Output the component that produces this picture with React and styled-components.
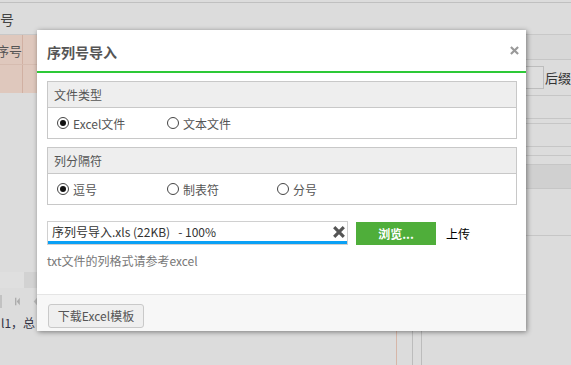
import React from 'react';
import styled, { createGlobalStyle } from 'styled-components';

const Global = createGlobalStyle`
  html, body { margin: 0; padding: 0; }
  body {
    width: 571px; height: 365px; overflow: hidden;
    background: #dcdcdc;
    font-family: "Noto Sans CJK SC", "Noto Sans", sans-serif;
  }
  * { box-sizing: border-box; }
`;

const Page = styled.div`
  position: relative;
  width: 571px;
  height: 365px;
  overflow: hidden;
  padding-top: 2px;
  display: flex;
  flex-direction: column;
`;

const TopBar = styled.div`
  height: 33px;
  border-top: 1px solid #c0c0c0;
  border-bottom: 1px solid #c8c8c8;
  display: flex;
  align-items: center;
  font-size: 14px;
  color: #444;
`;

const BgBody = styled.div`
  flex: 1;
  display: flex;
`;

const Col = styled.div`
  width: ${p => p.$w ? p.$w + 'px' : 'auto'};
  flex: ${p => p.$w ? 'none' : '1'};
  display: flex;
  flex-direction: column;
  overflow: hidden;
`;

const PinkRow = styled.div`
  height: ${p => p.$h}px;
  flex: none;
  background: #dfc8bd;
  display: flex;
  border-bottom: ${p => p.$line ? '1px solid #d6bcb0' : 'none'};
`;

const PinkCell = styled.div`
  width: 23px;
  border-right: 1px solid #d1b0a2;
  overflow: hidden;
  display: flex;
  align-items: center;
  justify-content: flex-end;
  font-size: 13px;
  color: #555;
  white-space: nowrap;
  padding-top: 2px;
`;

const Spacer = styled.div`
  height: ${p => p.$h}px;
  flex: ${p => p.$h ? 'none' : '1'};
`;

const Band = styled.div`
  height: 16px;
  flex: none;
  display: flex;
`;

const BandCell = styled.div`
  width: ${p => p.$w}px;
  background: ${p => p.$bg};
`;

const Pager = styled.div`
  height: 26px;
  flex: none;
  display: flex;
  align-items: center;
`;

const PagerBar = styled.div`
  width: 3px;
  height: 13px;
  background: #c2c2c2;
  margin-right: 13px;
`;

const FooterText = styled.div`
  font-size: 12px;
  color: #334;
  white-space: nowrap;
  padding-left: 1px;
  width: 37px;
  overflow: hidden;
`;

const RRow = styled.div`
  height: ${p => p.$h}px;
  flex: none;
  background: ${p => p.$bg || 'transparent'};
  border-bottom: 1px solid #c6c6c6;
  display: flex;
  align-items: center;
`;

const RInput = styled.div`
  width: 20px;
  height: 23px;
  border: 1px solid #bdbdbd;
  border-left: none;
  background: #dedede;
`;

const RLabel = styled.span`
  font-size: 13px;
  color: #333;
  margin-left: 1px;
  white-space: nowrap;
`;

const MidBottom = styled.div`
  height: 34px;
  flex: none;
  display: flex;
`;

const VCell = styled.div`
  width: ${p => p.$w}px;
  border-right: 1px solid ${p => p.$c};
`;

const Modal = styled.div`
  position: absolute;
  left: 37px;
  top: 30px;
  width: 489px;
  height: 301px;
  background: #fff;
  box-shadow: 1px 1px 5px rgba(0, 0, 0, 0.45);
  display: flex;
  flex-direction: column;
`;

const Header = styled.div`
  height: 43px;
  flex: none;
  border-bottom: 2px solid #2dc937;
  display: flex;
  align-items: center;
  justify-content: space-between;
  padding: 0 7px 0 10px;
`;

const Title = styled.div`
  font-size: 14px;
  font-weight: 700;
  color: #555;
  padding-top: 3px;
`;

const Content = styled.div`
  flex: 1;
  padding: 8px 9px 0 10px;
`;

const Group = styled.div`
  border: 1px solid #c8c8c8;
  & + & { margin-top: 8px; }
`;

const GroupHead = styled.div`
  height: 26px;
  background: #eeeeee;
  border-bottom: 1px solid #c8c8c8;
  padding-left: 6px;
  font-size: 12px;
  line-height: 25px;
  color: #555;
`;

const GroupBody = styled.div`
  height: 30px;
  display: flex;
  align-items: center;
  padding-left: 9px;
`;

const Option = styled.label`
  width: 110px;
  display: flex;
  align-items: center;
  gap: 4px;
  font-size: 12px;
  color: #555;
`;

const Radio = styled.span`
  width: 12px;
  height: 12px;
  border-radius: 50%;
  border: 1px solid #444;
  background: #fff;
  display: flex;
  align-items: center;
  justify-content: center;
  &::after {
    content: '';
    width: 6px;
    height: 6px;
    border-radius: 50%;
    background: ${p => p.$on ? '#111' : 'transparent'};
  }
`;

const FileRow = styled.div`
  margin-top: 16px;
  display: flex;
  align-items: center;
`;

const FileBox = styled.div`
  width: 301px;
  height: 24px;
  border: 1px solid #d0d0d0;
  display: flex;
  flex-direction: column;
`;

const FileTop = styled.div`
  flex: 1;
  display: flex;
  align-items: center;
  justify-content: space-between;
  padding: 0 2px 0 4px;
  font-size: 12px;
  color: #333;
  white-space: pre;
`;

const Progress = styled.div`
  height: 3px;
  background: #0aa0f5;
`;

const Browse = styled.button`
  margin-left: 8px;
  width: 80px;
  height: 23px;
  border: none;
  background: #4fae3a;
  color: #fff;
  font-family: inherit;
  font-size: 12px;
  font-weight: 700;
  padding: 0;
`;

const Upload = styled.span`
  margin-left: 10px;
  font-size: 12px;
  color: #000;
`;

const Hint = styled.div`
  margin-top: 8px;
  font-size: 12px;
  line-height: 16px;
  color: #777;
`;

const Footer = styled.div`
  height: 37px;
  flex: none;
  border-top: 1px solid #e5e5e5;
  background: #f7f7f7;
  padding: 7px 0 0 11px;
`;

const GrayButton = styled.button`
  width: 96px;
  height: 24px;
  border: 1px solid #c9c9c9;
  border-radius: 3px;
  background: #efefef;
  color: #555;
  font-family: inherit;
  font-size: 12px;
  padding: 0;
`;

const XIcon = ({ size, color, w }) => (
  <svg width={size} height={size} viewBox="0 0 10 10" style={{ display: 'block' }}>
    <path d="M1 1 L9 9 M9 1 L1 9" stroke={color} strokeWidth={w} strokeLinecap="butt" fill="none" />
  </svg>
);

const FirstIcon = () => (
  <svg width="7" height="13" viewBox="0 0 7 13" style={{ display: 'block' }}>
    <rect x="0" y="1" width="2" height="11" fill="#acacac" />
    <path d="M7 1 L2.5 6.5 L7 12 Z" fill="#acacac" />
  </svg>
);

const PrevIcon = () => (
  <svg width="6" height="13" viewBox="0 0 6 13" style={{ display: 'block', marginLeft: 13 }}>
    <path d="M6 1 L1 6.5 L6 12 Z" fill="#b8b8b8" />
  </svg>
);

const groups = [
  { title: '文件类型', options: ['Excel文件', '文本文件'], sel: 0 },
  { title: '列分隔符', options: ['逗号', '制表符', '分号'], sel: 0 },
];

export default function App() {
  const progress = 100;
  return (
    <>
      <Global />
      <Page>
        <TopBar>号</TopBar>
        <BgBody>
          <Col $w={37}>
            <PinkRow $h={30} $line><PinkCell>序号</PinkCell></PinkRow>
            <PinkRow $h={28}><PinkCell /></PinkRow>
            <Spacer $h={179} />
            <Band>
              <BandCell $w={24} $bg="#dfdfdf" />
              <BandCell $w={13} $bg="#d2d2d2" />
            </Band>
            <Pager>
              <PagerBar />
              <FirstIcon />
              <PrevIcon />
            </Pager>
            <FooterText>l1，总</FooterText>
          </Col>
          <Col>
            <Spacer />
            <MidBottom>
              <VCell $w={360} $c="#d6b6a8" />
              <VCell $w={16} $c="#bcbcbc" />
              <VCell $w={9} $c="#bcbcbc" />
            </MidBottom>
          </Col>
          <Col $w={45}>
            <RRow $h={25} $bg="#d8d8d8" />
            <RRow $h={36}>
              <RInput />
              <RLabel>后缀</RLabel>
            </RRow>
            <RRow $h={23} />
            <RRow $h={5} />
            <RRow $h={23} />
            <RRow $h={9} />
            <RRow $h={9} />
            <RRow $h={24} $bg="#d0d0d0" />
            <RRow $h={47} />
          </Col>
        </BgBody>

        <Modal>
          <Header>
            <Title>序列号导入</Title>
            <XIcon size={9} color="#999" w={2.4} />
          </Header>
          <Content>
            {groups.map(g => (
              <Group key={g.title}>
                <GroupHead>{g.title}</GroupHead>
                <GroupBody>
                  {g.options.map((o, i) => (
                    <Option key={o}>
                      <Radio $on={i === g.sel} />
                      {o}
                    </Option>
                  ))}
                </GroupBody>
              </Group>
            ))}
            <FileRow>
              <FileBox>
                <FileTop>
                  <span>{'序列号导入.xls (22KB)   - 100%'}</span>
                  <XIcon size={12} color="#555" w={2.6} />
                </FileTop>
                <Progress style={{ width: `${progress}%` }} />
              </FileBox>
              <Browse>浏览...</Browse>
              <Upload>上传</Upload>
            </FileRow>
            <Hint>txt文件的列格式请参考excel</Hint>
          </Content>
          <Footer>
            <GrayButton>下载Excel模板</GrayButton>
          </Footer>
        </Modal>
      </Page>
    </>
  );
}
